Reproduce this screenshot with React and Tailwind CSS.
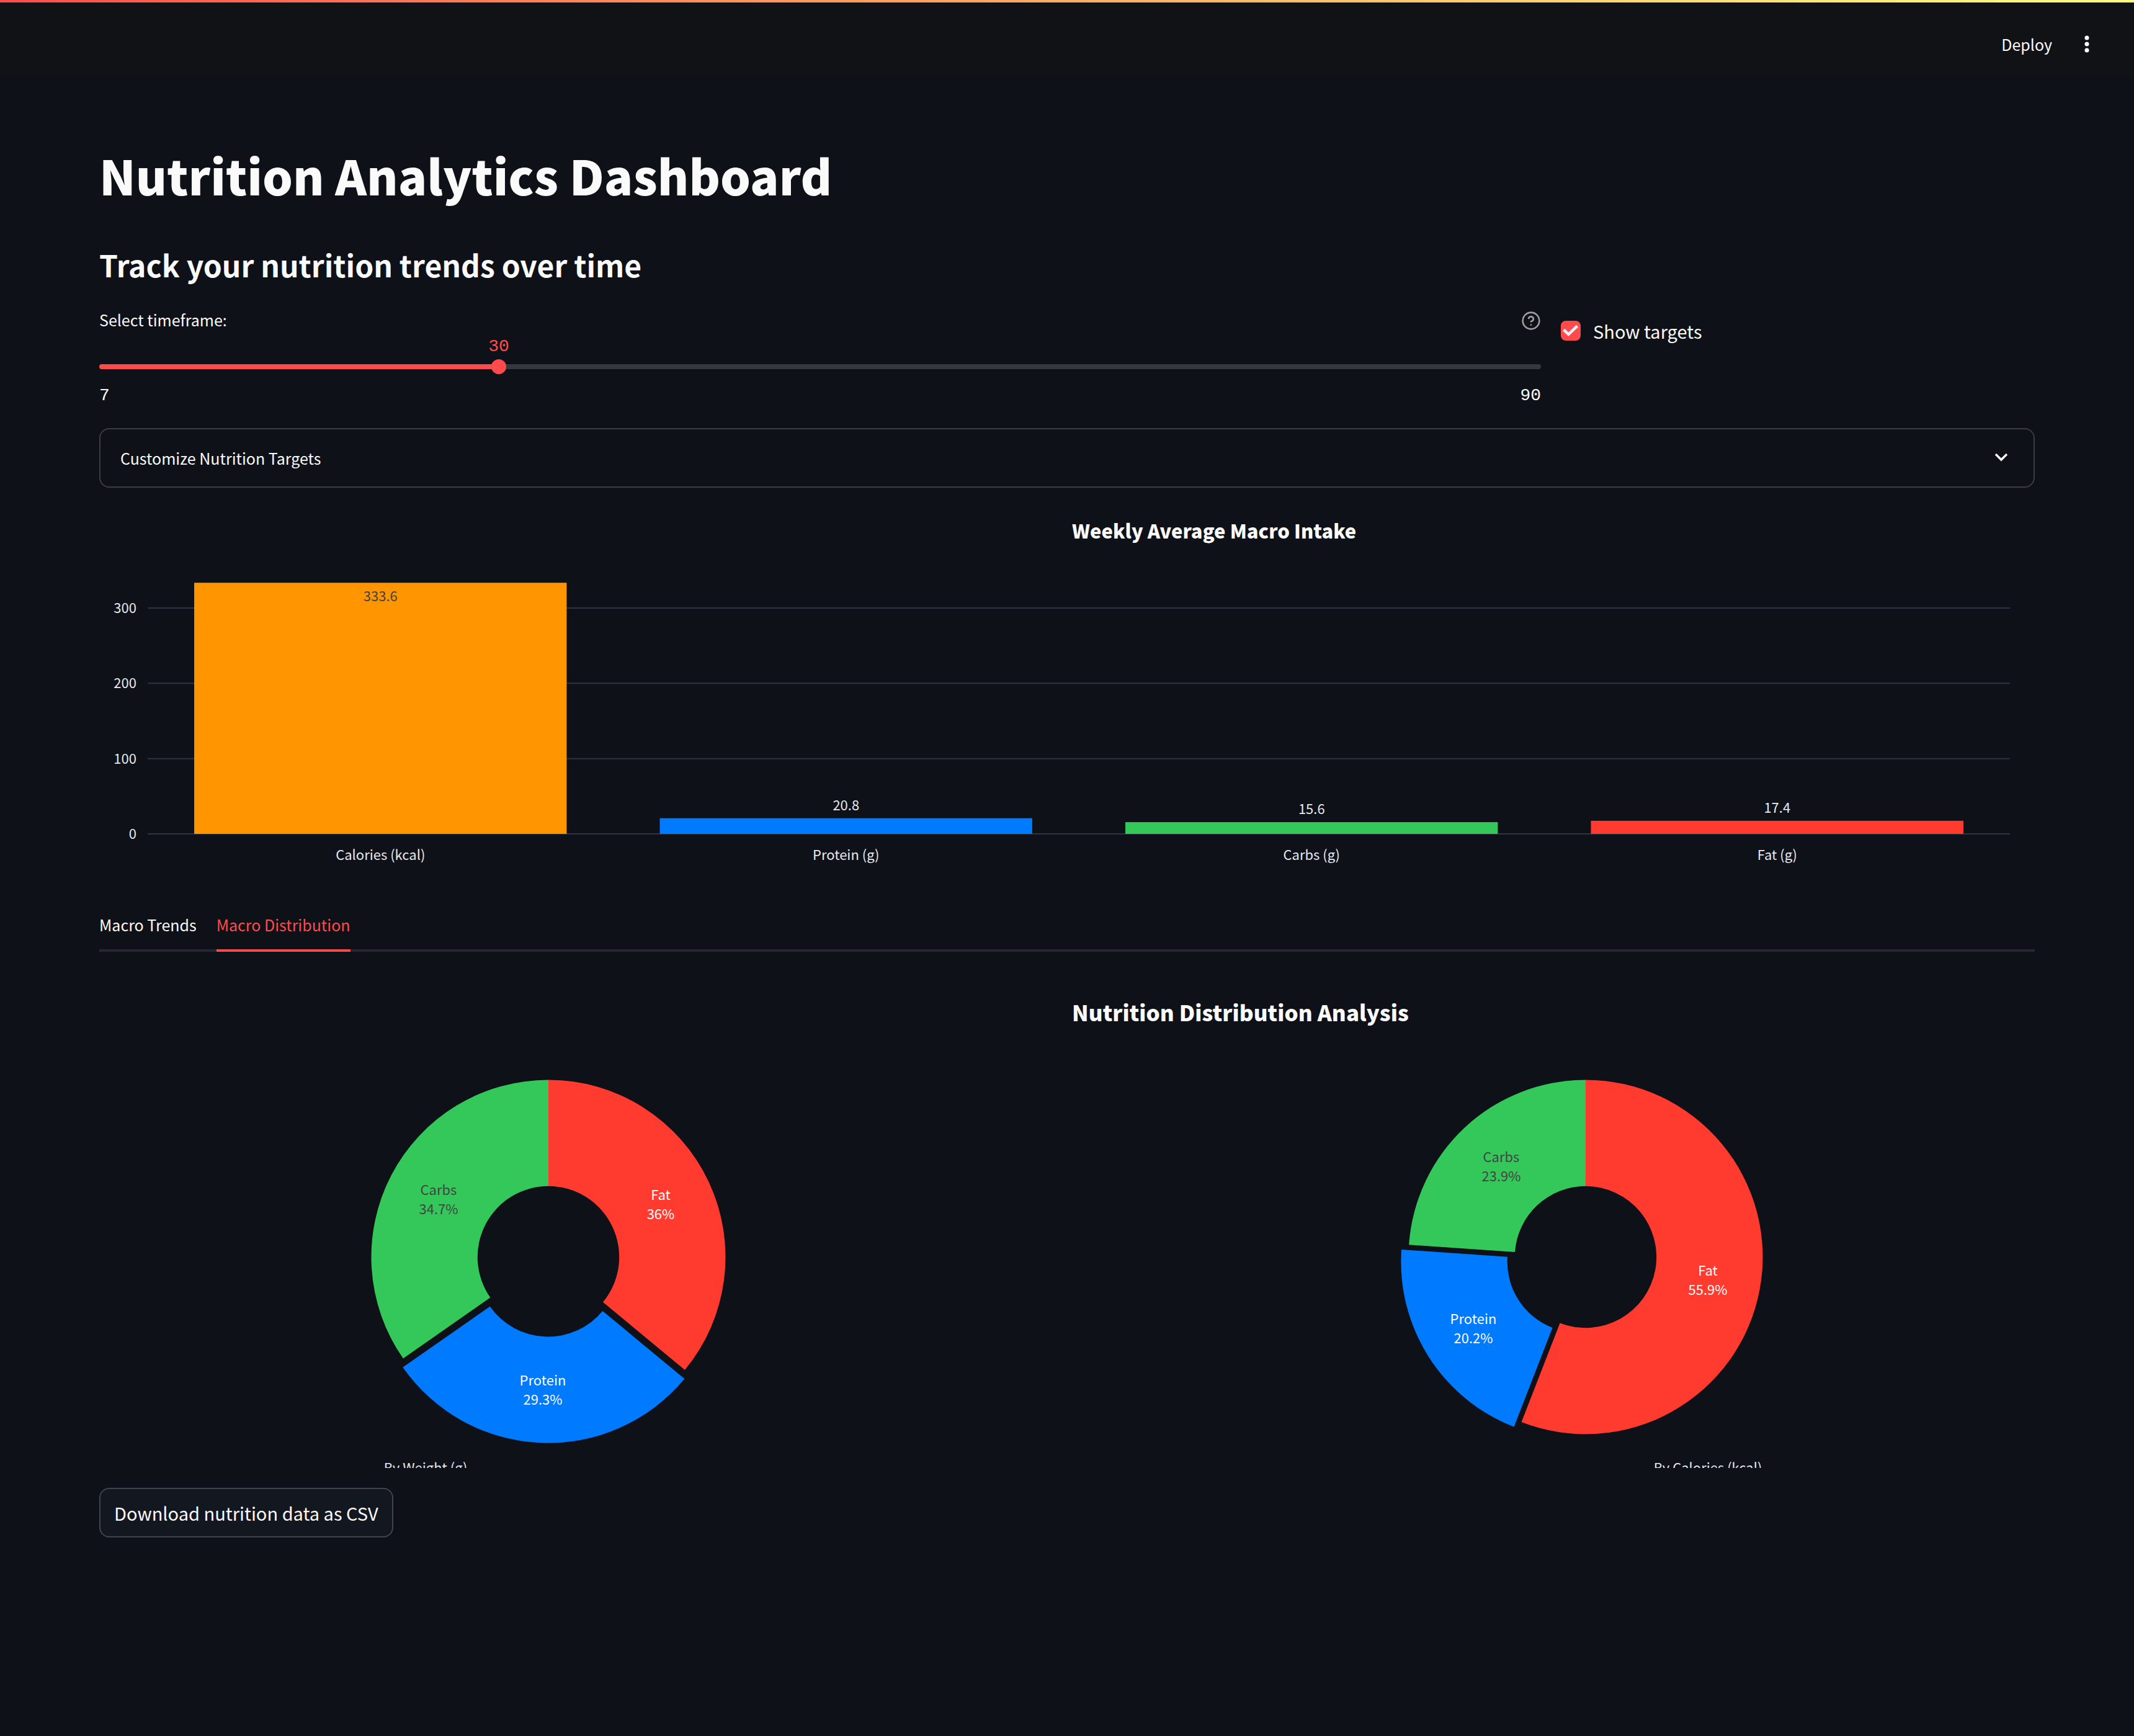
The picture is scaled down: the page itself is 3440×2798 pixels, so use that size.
import { useState } from "react";

const TEXT = "'Noto Sans CJK SC', 'Noto Sans', sans-serif";
const COLORS = { orange: "#ff9500", blue: "#007aff", green: "#34c759", red: "#ff3b30" };

const AVERAGES = [
  { label: "Calories (kcal)", value: 333.6, color: COLORS.orange, inside: true },
  { label: "Protein (g)", value: 20.8, color: COLORS.blue },
  { label: "Carbs (g)", value: 15.6, color: COLORS.green },
  { label: "Fat (g)", value: 17.4, color: COLORS.red },
];

const BY_WEIGHT = [
  { name: "Fat", share: 36, color: COLORS.red, x: 1065, y: 1934 },
  { name: "Protein", share: 29.3, color: COLORS.blue, pull: true, x: 875, y: 2233 },
  { name: "Carbs", share: 34.7, color: COLORS.green, dark: true, x: 707, y: 1926 },
];

const BY_CALORIES = [
  { name: "Fat", share: 55.9, color: COLORS.red, x: 2753, y: 2056 },
  { name: "Protein", share: 20.2, color: COLORS.blue, pull: true, x: 2375, y: 2134 },
  { name: "Carbs", share: 23.9, color: COLORS.green, dark: true, x: 2420, y: 1873 },
];

function Header() {
  return (
    <header className="bg-[#111215]">
      <div className="h-1 bg-linear-to-r from-[#ff4b4b] to-[#fffd80]" />
      <div className="flex h-[118px] items-center justify-end gap-11 pt-4 pr-16">
        <button type="button" className="text-[25px] leading-10">Deploy</button>
        <button type="button" aria-label="Main menu" className="flex w-6 justify-center">
          <svg width="8" height="28" viewBox="0 0 8 28" fill="currentColor" aria-hidden="true">
            <circle cx="4" cy="4" r="3.5" />
            <circle cx="4" cy="14" r="3.5" />
            <circle cx="4" cy="24" r="3.5" />
          </svg>
        </button>
      </div>
    </header>
  );
}

function HelpIcon() {
  return (
    <svg width="32" height="32" viewBox="0 0 24 24" fill="none" stroke="currentColor" strokeWidth="2" strokeLinecap="round" strokeLinejoin="round" aria-hidden="true">
      <circle cx="12" cy="12" r="10" />
      <path d="M9.09 9a3 3 0 0 1 5.83 1c0 2-3 3-3 3" />
      <path d="M12 17h.01" />
    </svg>
  );
}

function TimeframeSlider() {
  const min = 7;
  const max = 90;
  const [days, setDays] = useState(30);
  const percent = ((days - min) / (max - min)) * 100 + "%";
  return (
    <div className="flex w-[calc(75%-16px)] flex-col">
      <div className="flex h-[38px] items-center justify-between">
        <label htmlFor="timeframe" className="pb-1 text-[25px] leading-9">Select timeframe:</label>
        <button type="button" aria-label="Help" className="text-[#9c9d9f]"><HelpIcon /></button>
      </div>
      <div className="h-[46px] font-['Liberation_Mono',monospace] text-[28px] leading-[46px] text-[#ff4b4b]">
        <output htmlFor="timeframe" className="inline-block -translate-x-1/2" style={{ marginLeft: percent }}>{days}</output>
      </div>
      <div className="relative mt-[5px] h-2 rounded-full bg-[#36383f]">
        <div className="h-2 rounded-full bg-[#ff4b4b]" style={{ width: percent }} />
        <input
          id="timeframe"
          type="range"
          min={min}
          max={max}
          value={days}
          onChange={(e) => setDays(Number(e.target.value))}
          className="absolute -inset-x-3 -top-2 h-6 w-[calc(100%+24px)] cursor-pointer appearance-none bg-transparent [&::-webkit-slider-thumb]:size-6 [&::-webkit-slider-thumb]:appearance-none [&::-webkit-slider-thumb]:rounded-full [&::-webkit-slider-thumb]:bg-[#ff4b4b]"
        />
      </div>
      <div className="mt-6 flex justify-between font-['Liberation_Mono',monospace] text-[28px] leading-[38px]">
        <span>{min}</span>
        <span>{max}</span>
      </div>
    </div>
  );
}

function TargetsCheckbox() {
  const [checked, setChecked] = useState(true);
  return (
    <div className="w-[calc(25%-16px)] pt-[15px]">
      <label className="flex items-center gap-5 text-[29px] leading-10">
        <span className="relative size-8">
          <input
            type="checkbox"
            checked={checked}
            onChange={(e) => setChecked(e.target.checked)}
            className="peer block size-8 appearance-none rounded-lg border-2 border-[#41444c] checked:border-[#ff4b4b] checked:bg-[#ff4b4b]"
          />
          <svg viewBox="0 0 32 32" className="pointer-events-none absolute inset-0 hidden size-8 peer-checked:block" fill="none" stroke="#eef0f6" strokeWidth="4.5" aria-hidden="true">
            <path d="M4.700 14.500l7.800 7.400L26.500 8.500" />
          </svg>
        </span>
        Show targets
      </label>
    </div>
  );
}

const svgText = { fontFamily: TEXT };

function BarChart() {
  const left = 78;
  const width = 3002;
  const base = 526;
  const perUnit = 1.2133;
  const slot = width / AVERAGES.length;
  return (
    <svg viewBox="0 0 3120 600" className="block h-auto w-full" role="img" aria-label="Weekly Average Macro Intake" style={svgText}>
      <text x="1568" y="50" fontSize="31" fontWeight="900" fill="#fafafa">Weekly Average Macro Intake</text>
      {[0, 100, 200, 300].map((tick) => {
        const y = base - tick * perUnit;
        return (
          <g key={tick}>
            <line x1={left} x2={left + width} y1={y} y2={y} stroke="#31333f" strokeWidth="2" />
            <text x="60" y={y + 8} textAnchor="end" fontSize="22" fill="#e6eaf1">{tick}</text>
          </g>
        );
      })}
      {AVERAGES.map((bar, i) => {
        const height = bar.value * perUnit;
        const center = left + slot * (i + 0.5);
        return (
          <g key={bar.label} textAnchor="middle" fontSize="22" fill="#e6eaf1">
            <rect x={center - slot * 0.4} y={base - height} width={slot * 0.8} height={height} fill={bar.color} />
            <text x={center} y={bar.inside ? base - height + 30 : base - height - 13} fill={bar.inside ? "#444444" : "#e6eaf1"}>{bar.value}</text>
            <text x={center} y="568">{bar.label}</text>
          </g>
        );
      })}
    </svg>
  );
}

function Donut({ cx, cy, slices }) {
  const outer = 285.5;
  const inner = 114.2;
  let start = 0;
  return (
    <g>
      {slices.map((slice) => {
        const a = (start / 100) * 2 * Math.PI;
        const b = ((start + slice.share) / 100) * 2 * Math.PI;
        start += slice.share;
        const mid = (a + b) / 2;
        const pull = slice.pull ? outer * 0.05 : 0;
        const ox = cx + pull * Math.sin(mid);
        const oy = cy - pull * Math.cos(mid);
        const point = (r, t) => `${ox + r * Math.sin(t)} ${oy - r * Math.cos(t)}`;
        const large = b - a > Math.PI ? 1 : 0;
        const d = `M${point(outer, a)}A${outer} ${outer} 0 ${large} 1 ${point(outer, b)}L${point(inner, b)}A${inner} ${inner} 0 ${large} 0 ${point(inner, a)}Z`;
        return (
          <g key={slice.name} textAnchor="middle" fontSize="22" fill={slice.dark ? "#444444" : "#ffffff"}>
            <path d={d} fill={slice.color} />
            <text x={slice.x} y={slice.y}>{slice.name}</text>
            <text x={slice.x} y={slice.y + 31}>{slice.share}%</text>
          </g>
        );
      })}
    </g>
  );
}

function DistributionChart() {
  return (
    <svg viewBox="160 1566 3120 800" className="block h-auto w-full overflow-hidden" role="img" aria-label="Nutrition Distribution Analysis" style={svgText}>
      <text x="1728" y="1646" fontSize="35" fontWeight="900" fill="#fafafa">Nutrition Distribution Analysis</text>
      <Donut cx={884} cy={2026} slices={BY_WEIGHT} />
      <Donut cx={2556} cy={2026} slices={BY_CALORIES} />
      <g textAnchor="middle" fontSize="22" fill="#e6eaf1">
        <text x="686" y="2374">By Weight (g)</text>
        <text x="2753" y="2374">By Calories (kcal)</text>
      </g>
    </svg>
  );
}

export default function App() {
  return (
    <div className="min-h-screen bg-[#0e1117] text-[#fafafa]" style={{ fontFamily: TEXT }}>
      <Header />
      <main className="px-40 pt-25 pb-80">
        <h1 className="text-[77px] leading-[120px] font-black">Nutrition Analytics Dashboard</h1>
        <h2 className="mt-10 text-[48px] leading-[88px] font-semibold">Track your nutrition trends over time</h2>
        <div className="mt-7 flex gap-8">
          <TimeframeSlider />
          <TargetsCheckbox />
        </div>
        <button type="button" className="mt-[33px] flex h-24 w-full items-center justify-between rounded-2xl border-2 border-[#3b3d42] px-8 text-[25px] leading-10">
          Customize Nutrition Targets
          <svg width="40" height="40" viewBox="0 0 40 40" fill="none" stroke="currentColor" strokeWidth="3.5" aria-hidden="true">
            <path d="M11 14l9 9 9-9" />
          </svg>
        </button>
        <section className="mt-8"><BarChart /></section>
        <div role="tablist" className="mt-8 flex h-21 gap-8 border-b-4 border-[#262730] text-[25px] leading-10">
          <button type="button" role="tab" aria-selected="false" className="h-21 pb-1">Macro Trends</button>
          <button type="button" role="tab" aria-selected="true" className="h-21 border-b-4 border-[#ff4b4b] text-[#ff4b4b]">Macro Distribution</button>
        </div>
        <section role="tabpanel" className="mt-8"><DistributionChart /></section>
        <button type="button" className="mt-8 h-20 rounded-2xl border-2 border-[#41444c] bg-[#131720] px-[22px] text-[29px] leading-10">
          Download nutrition data as CSV
        </button>
      </main>
    </div>
  );
}
